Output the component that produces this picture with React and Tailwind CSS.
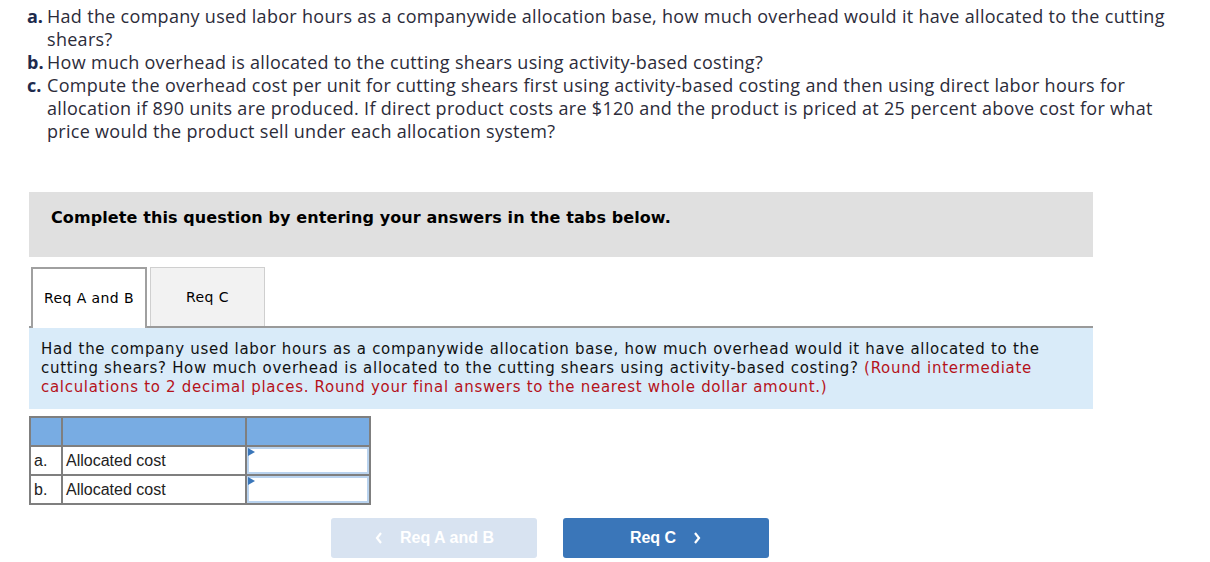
import React from 'react';

const questions = [
  { k: 'a.', t: 'Had the company used labor hours as a companywide allocation base, how much overhead would it have allocated to the cutting shears?' },
  { k: 'b.', t: 'How much overhead is allocated to the cutting shears using activity-based costing?' },
  { k: 'c.', t: 'Compute the overhead cost per unit for cutting shears first using activity-based costing and then using direct labor hours for allocation if 890 units are produced. If direct product costs are $120 and the product is priced at 25 percent above cost for what price would the product sell under each allocation system?' },
];

const rows = [
  { k: 'a.', label: 'Allocated cost' },
  { k: 'b.', label: 'Allocated cost' },
];

const AnswerInput = () => (
  <div className="relative h-full w-full border-2 border-[#b9d3ef] bg-white">
    <span className="absolute left-[-1px] top-[-1px] h-0 w-0 border-y-[4px] border-l-[7px] border-y-transparent border-l-[#3a76b9]" />
  </div>
);

export default function App() {
  return (
    <div className="min-h-screen bg-white text-[#2c2c3a]" style={{ fontFamily: '"Open Sans", "Liberation Sans", sans-serif' }}>
      <div className="w-[1182px] pl-[27px] pt-[5px]">
        {questions.map((q) => (
          <div key={q.k} className="flex text-[18px] leading-[23px] tracking-[0.3px]">
            <span className="w-[20px] shrink-0 font-bold tracking-normal text-[#1d2a4d]">{q.k}</span>
            <span>{q.t}</span>
          </div>
        ))}
      </div>

      <div className="ml-[29px] mt-[49px] w-[1064px]">
        <div className="h-[65px] bg-[#e0e0e0] pl-[22px] pt-[16px] text-[16px] font-bold leading-[20px] tracking-[0.1px] text-black" style={{ fontFamily: '"DejaVu Sans", Verdana, sans-serif' }}>
          Complete this question by entering your answers in the tabs below.
        </div>

        <div className="mt-[10px] flex items-end border-b-2 border-[#9a9a9a] pl-[2px]" style={{ fontFamily: '"DejaVu Sans", Verdana, sans-serif' }}>
          <div className="-mb-[2px] flex h-[61px] w-[116px] items-center justify-center border-2 border-b-0 border-[#a0a0a0] bg-white text-[14px] tracking-[0.4px] text-black">
            Req A and B
          </div>
          <div className="ml-[3px] flex h-[59px] w-[115px] items-center justify-center border border-b-0 border-[#cfcfcf] bg-[#f2f2f2] text-[14px] tracking-[0.4px] text-black">
            Req C
          </div>
        </div>

        <div className="bg-[#d9ebf9] pb-[12px] pl-[12px] pr-[40px] pt-[12px] text-[15px] leading-[19px] tracking-[0.7px] text-[#111]" style={{ fontFamily: '"DejaVu Sans", Verdana, sans-serif' }}>
          Had the company used labor hours as a companywide allocation base, how much overhead would it have allocated to the cutting shears? How much overhead is allocated to the cutting shears using activity-based costing?{' '}
          <span className="text-[#b5121b]">(Round intermediate calculations to 2 decimal places. Round your final answers to the nearest whole dollar amount.)</span>
        </div>

        <table className="mt-[7px] border-collapse text-[16px] text-[#222]" style={{ fontFamily: '"Liberation Sans", Arial, sans-serif' }}>
          <tbody>
            <tr className="h-[29px] bg-[#78ace3]">
              <td className="w-[32px] border-2 border-[#7f7f7f]" />
              <td className="w-[184px] border-2 border-[#7f7f7f]" />
              <td className="w-[124px] border-2 border-[#7f7f7f]" />
            </tr>
            {rows.map((r) => (
              <tr key={r.k} className="h-[29px]">
                <td className="border-2 border-[#7f7f7f] pl-[3px] align-middle">{r.k}</td>
                <td className="border-2 border-[#7f7f7f] pl-[3px] align-middle">{r.label}</td>
                <td className="h-[29px] border-2 border-[#7f7f7f] p-0">
                  <AnswerInput />
                </td>
              </tr>
            ))}
          </tbody>
        </table>
      </div>

      <div className="ml-[331px] mt-[13px] flex gap-[26px]" style={{ fontFamily: '"Liberation Sans", Arial, sans-serif' }}>
        <div className="flex h-[40px] w-[206px] items-center justify-center gap-[16px] rounded-[3px] bg-[#d8e3f1] text-[16px] font-bold text-white">
          <svg width="10" height="14" viewBox="0 0 10 14" fill="none" stroke="currentColor" strokeWidth="2.2"><path d="M7 2 L3 7 L7 12" /></svg>
          Req A and B
        </div>
        <div className="flex h-[40px] w-[206px] items-center justify-center gap-[16px] rounded-[3px] bg-[#3a76b9] text-[16px] font-bold text-white">
          Req C
          <svg width="10" height="14" viewBox="0 0 10 14" fill="none" stroke="currentColor" strokeWidth="2.2"><path d="M3 2 L7 7 L3 12" /></svg>
        </div>
      </div>
    </div>
  );
}
